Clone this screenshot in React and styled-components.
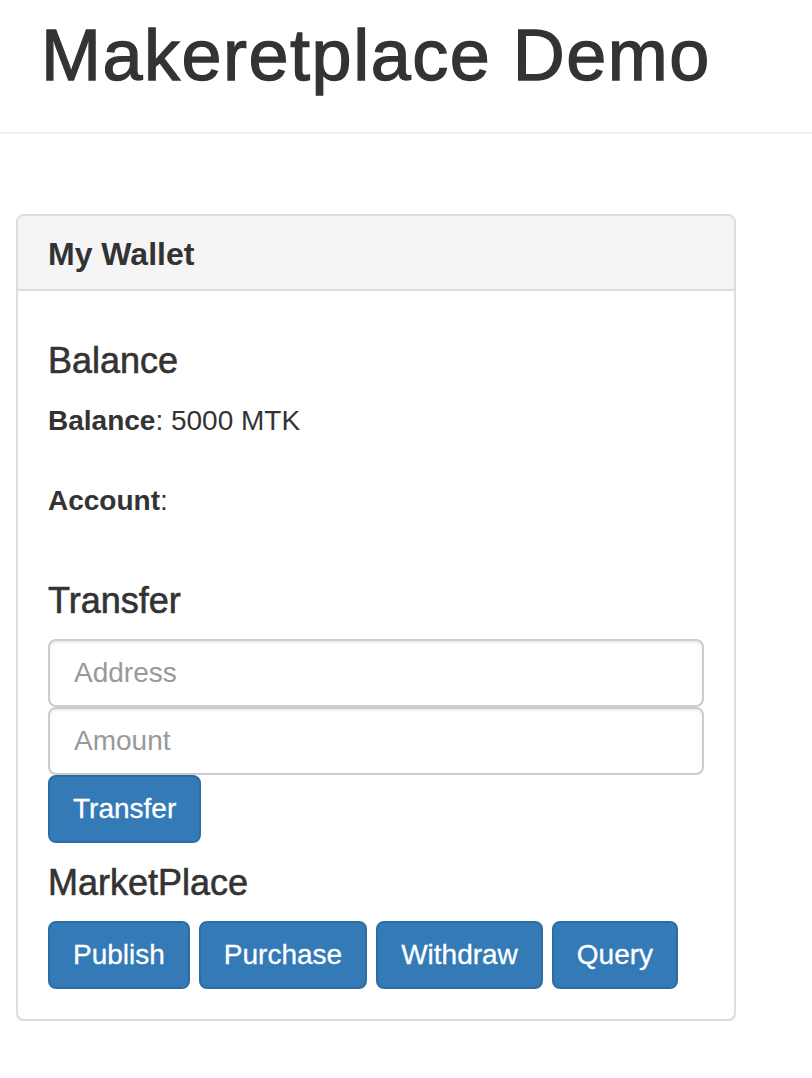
import React from 'react';
import styled, { createGlobalStyle } from 'styled-components';

const GlobalStyle = createGlobalStyle`
  body {
    margin: 0;
    font-family: "Liberation Sans", Arial, Helvetica, sans-serif;
    color: #333;
    background: #fff;
  }
  * { box-sizing: border-box; }`;

const PageHeader = styled.div`
  padding: 16px 0 37px 41px;
  border-bottom: 2px solid #eee;`;

const Title = styled.h1`
  margin: 0;
  font-size: 72px;
  font-weight: 400;
  line-height: 79px;
  letter-spacing: 1.5px;
  -webkit-text-stroke: 1.3px #333;`;

const Panel = styled.div`
  width: 720px;
  margin: 80px 0 0 16px;
  border: 2px solid #ddd;
  border-radius: 8px;
  background: #fff;
  box-shadow: 0 2px 2px rgba(0, 0, 0, 0.05);`;

const PanelHeading = styled.div`
  padding: 21px 30px 17px;
  background: #f5f5f5;
  border-bottom: 2px solid #ddd;
  border-radius: 6px 6px 0 0;`;

const PanelTitle = styled.h3`
  margin: 0;
  font-size: 32px;
  font-weight: 700;
  line-height: 35px;`;

const PanelBody = styled.div`
  display: flex;
  flex-direction: column;
  padding: 30px;`;

const Heading = styled.h4`
  margin: 20px 0 ${(p) => (p.$tight ? '18px' : '20px')};
  font-size: 36px;
  font-weight: 400;
  line-height: 40px;
  -webkit-text-stroke: 0.6px #333;`;

const Line = styled.p`
  margin: 0 0 40px;
  font-size: 28px;
  line-height: 40px;`;

const Input = styled.input`
  display: block;
  width: 100%;
  height: 68px;
  padding: 12px 24px;
  font-family: inherit;
  font-size: 28px;
  color: #555;
  background: #fff;
  border: 2px solid #ccc;
  border-radius: 8px;
  box-shadow: inset 0 2px 2px rgba(0, 0, 0, 0.075);
  outline: none;

  &::placeholder {
    color: #999;
  }`;

const Button = styled.button`
  align-self: flex-start;
  padding: 12px 23px;
  font-family: inherit;
  font-size: 28px;
  line-height: 40px;
  color: #fff;
  background: #337ab7;
  border: 2px solid #2e6da4;
  border-radius: 8px;
  -webkit-text-stroke: 0.3px #fff;
  cursor: pointer;`;

const ButtonRow = styled.div`
  display: flex;
  gap: 9px;`;

const App = () => {
	return (
		<>
			<GlobalStyle />
			<PageHeader>
				<Title>Makeretplace Demo</Title>
			</PageHeader>
			<Panel>
				<PanelHeading>
					<PanelTitle>My Wallet</PanelTitle>
				</PanelHeading>
				<PanelBody>
					<Heading>Balance</Heading>
					<Line><strong>Balance</strong>: 5000 MTK</Line>
					<Line><strong>Account</strong>: </Line>
					<Heading $tight>Transfer</Heading>
					<Input placeholder="Address" />
					<Input placeholder="Amount" />
					<Button>Transfer</Button>
					<Heading $tight>MarketPlace</Heading>
					<ButtonRow>
						<Button>Publish</Button>
						<Button>Purchase</Button>
						<Button>Withdraw</Button>
						<Button>Query</Button>
					</ButtonRow>
				</PanelBody>
			</Panel>
		</>
	);
};

export default App;
